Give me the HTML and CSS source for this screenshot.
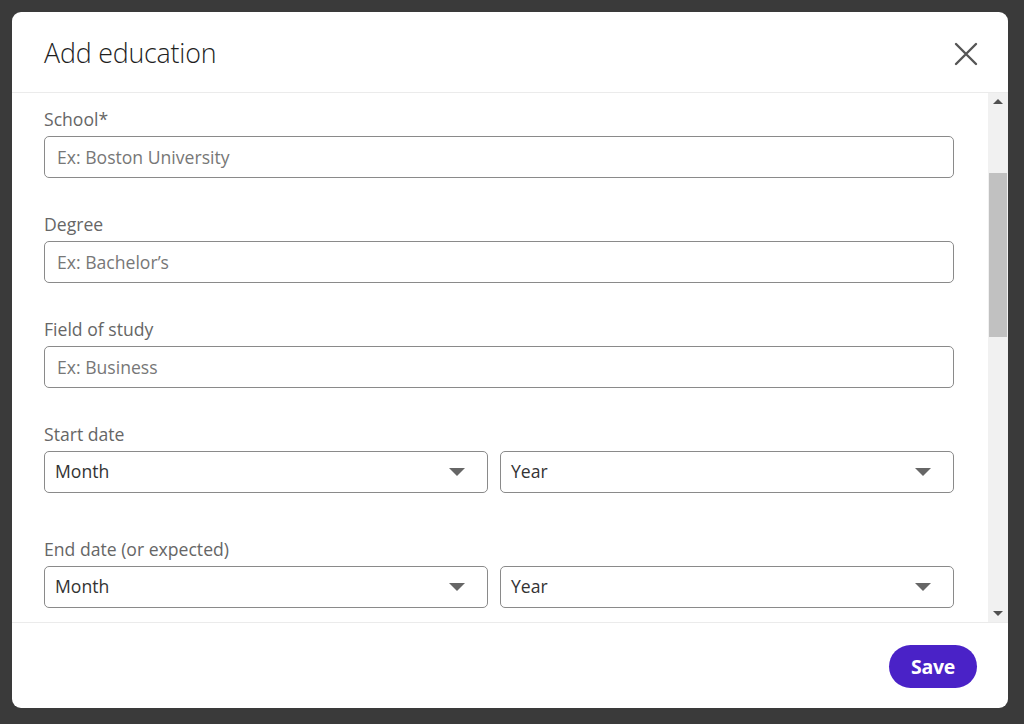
FILE: index.html
```html
<!DOCTYPE html>
<html lang="en">
<head>
<meta charset="utf-8">
<title>Add education</title>
<link rel="stylesheet" href="styles.css">
</head>
<body>
<div class="backdrop">
  <div class="modal">
    <header class="modal-header">
      <h2 class="title">Add education</h2>
      <button class="close" aria-label="Dismiss">
        <svg width="24" height="24" viewBox="0 0 24 24"><path d="M2 2 L22 22 M22 2 L2 22" stroke="#555" stroke-width="2.4" stroke-linecap="round" fill="none"/></svg>
      </button>
    </header>
    <div class="modal-body">
      <div class="content">
        <div class="field">
          <label class="label">School*</label>
          <div class="input placeholder">Ex: Boston University</div>
        </div>
        <div class="field">
          <label class="label">Degree</label>
          <div class="input placeholder">Ex: Bachelor’s</div>
        </div>
        <div class="field">
          <label class="label">Field of study</label>
          <div class="input placeholder">Ex: Business</div>
        </div>
        <div class="field field-start">
          <label class="label">Start date</label>
          <div class="date-row">
            <div class="select select-month"><span>Month</span><i class="caret"></i></div>
            <div class="select"><span>Year</span><i class="caret"></i></div>
          </div>
        </div>
        <div class="field">
          <label class="label">End date (or expected)</label>
          <div class="date-row">
            <div class="select select-month"><span>Month</span><i class="caret"></i></div>
            <div class="select"><span>Year</span><i class="caret"></i></div>
          </div>
        </div>
      </div>
      <div class="scrollbar">
        <div class="sb-arrow sb-up"></div>
        <div class="sb-track">
          <div class="sb-gap-top"></div>
          <div class="sb-thumb"></div>
        </div>
        <div class="sb-arrow sb-down"></div>
      </div>
    </div>
    <footer class="modal-footer">
      <button class="save">Save</button>
    </footer>
  </div>
</div>
</body>
</html>
```

FILE: styles.css
```css
* { box-sizing: border-box; }
html, body { margin: 0; padding: 0; }
body {
  width: 1024px;
  height: 724px;
  overflow: hidden;
  background: #3a3a3a;
  font-family: "Open Sans", "Noto Sans", "Liberation Sans", sans-serif;
}
.backdrop {
  height: 724px;
  padding: 12px 16px 16px 12px;
}
.modal {
  width: 996px;
  height: 696px;
  background: #fff;
  border-radius: 9px;
  display: flex;
  flex-direction: column;
  overflow: hidden;
}
.modal-header {
  height: 81px;
  flex: 0 0 81px;
  display: flex;
  align-items: center;
  justify-content: space-between;
  padding: 0 30px 0 32px;
  border-bottom: 1px solid #ebebeb;
}
.title {
  margin: 0;
  font-size: 26.8px;
  font-weight: 300;
  color: #1f1f1f;
  letter-spacing: -0.2px;
  position: relative;
  top: 0;
}
.close {
  border: 0;
  background: none;
  padding: 0;
  width: 24px;
  height: 24px;
  display: flex;
  position: relative;
  top: 2px;
}
.modal-body {
  flex: 1;
  display: flex;
  overflow: hidden;
}
.content {
  flex: 1;
  padding: 14px 34px 0 32px;
}
.field { margin-bottom: 34px; }
.field-start { margin-bottom: 44px; }
.label {
  display: block;
  font-size: 17.6px;
  line-height: 24px;
  color: #666;
  margin-bottom: 5px;
}
.input, .select {
  height: 42px;
  border: 1.5px solid #8a8a8a;
  border-radius: 5px;
  display: flex;
  align-items: center;
  padding: 0 12px;
  font-size: 17.6px;
}
.placeholder { color: #777; }
.date-row {
  display: flex;
  gap: 12px;
}
.select {
  flex: 1;
  justify-content: space-between;
  color: #333;
  padding: 0 22px 0 10px;
}
.select-month { flex: 0 0 444px; }
.select span { position: relative; top: -1px; }
.caret {
  width: 0;
  height: 0;
  border-left: 8px solid transparent;
  border-right: 8px solid transparent;
  border-top: 8px solid #666;
}
.scrollbar {
  width: 20px;
  flex: 0 0 20px;
  background: #f1f1f1;
  display: flex;
  flex-direction: column;
}
.sb-arrow {
  height: 17px;
  flex: 0 0 17px;
  display: flex;
  align-items: center;
  justify-content: center;
}
.sb-up::before {
  content: "";
  border-left: 5px solid transparent;
  border-right: 5px solid transparent;
  border-bottom: 5px solid #505050;
}
.sb-down::before {
  content: "";
  border-left: 5px solid transparent;
  border-right: 5px solid transparent;
  border-top: 5px solid #505050;
}
.sb-track {
  flex: 1;
  display: flex;
  flex-direction: column;
  padding: 0 1px 0 1px;
}
.sb-gap-top { height: 63px; }
.sb-thumb {
  height: 164px;
  background: #c1c1c1;
}
.modal-footer {
  height: 86px;
  flex: 0 0 86px;
  border-top: 1px solid #ebebeb;
  display: flex;
  align-items: center;
  justify-content: flex-end;
  padding: 2px 31px 0 0;
}
.save {
  width: 88px;
  height: 43px;
  border: 0;
  border-radius: 22px;
  background: #4a22c7;
  color: #fff;
  font-family: "Open Sans", "Noto Sans", sans-serif;
  font-weight: 700;
  font-size: 19.5px;
  letter-spacing: -0.3px;
}
```
